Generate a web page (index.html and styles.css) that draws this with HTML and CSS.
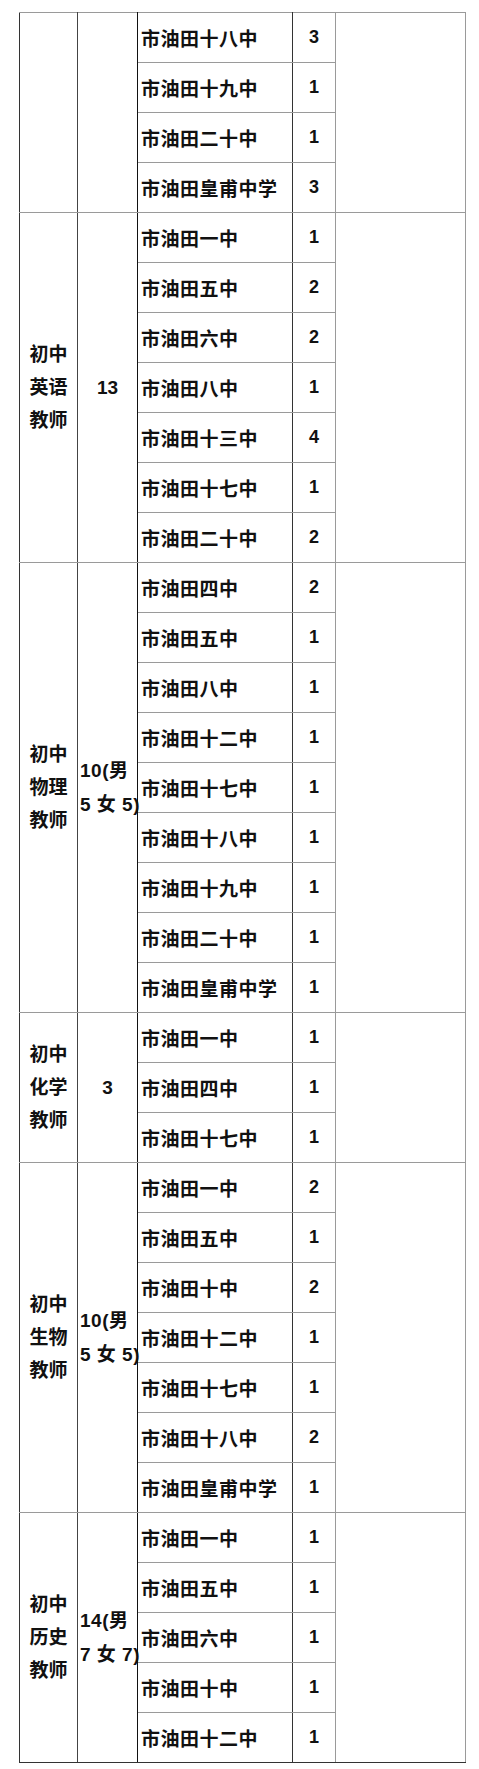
FILE: index.html
```html
<!DOCTYPE html>
<html lang="zh-CN">
<head>
<meta charset="utf-8">
<link rel="stylesheet" href="styles.css">
</head>
<body>
<table class="tbl">
<colgroup><col class="w1"><col class="w2"><col class="w3"><col class="w4"><col class="w5"></colgroup>
<tbody>
<tr><td class="c1" rowspan="4"></td><td class="c2" rowspan="4"></td><td class="c3">市油田十八中</td><td class="c4">3</td><td class="c5" rowspan="4"></td></tr>
<tr><td class="c3">市油田十九中</td><td class="c4">1</td></tr>
<tr><td class="c3">市油田二十中</td><td class="c4">1</td></tr>
<tr><td class="c3">市油田皇甫中学</td><td class="c4">3</td></tr>

<tr><td class="c1" rowspan="7">初中<br>英语<br>教师</td><td class="c2 ctr" rowspan="7">13</td><td class="c3">市油田一中</td><td class="c4">1</td><td class="c5" rowspan="7"></td></tr>
<tr><td class="c3">市油田五中</td><td class="c4">2</td></tr>
<tr><td class="c3">市油田六中</td><td class="c4">2</td></tr>
<tr><td class="c3">市油田八中</td><td class="c4">1</td></tr>
<tr><td class="c3">市油田十三中</td><td class="c4">4</td></tr>
<tr><td class="c3">市油田十七中</td><td class="c4">1</td></tr>
<tr><td class="c3">市油田二十中</td><td class="c4">2</td></tr>

<tr><td class="c1" rowspan="9">初中<br>物理<br>教师</td><td class="c2" rowspan="9"><span class="l">10(男</span><br><span class="l">5 女 5)</span></td><td class="c3">市油田四中</td><td class="c4">2</td><td class="c5" rowspan="9"></td></tr>
<tr><td class="c3">市油田五中</td><td class="c4">1</td></tr>
<tr><td class="c3">市油田八中</td><td class="c4">1</td></tr>
<tr><td class="c3">市油田十二中</td><td class="c4">1</td></tr>
<tr><td class="c3">市油田十七中</td><td class="c4">1</td></tr>
<tr><td class="c3">市油田十八中</td><td class="c4">1</td></tr>
<tr><td class="c3">市油田十九中</td><td class="c4">1</td></tr>
<tr><td class="c3">市油田二十中</td><td class="c4">1</td></tr>
<tr><td class="c3">市油田皇甫中学</td><td class="c4">1</td></tr>

<tr><td class="c1" rowspan="3">初中<br>化学<br>教师</td><td class="c2 ctr" rowspan="3">3</td><td class="c3">市油田一中</td><td class="c4">1</td><td class="c5" rowspan="3"></td></tr>
<tr><td class="c3">市油田四中</td><td class="c4">1</td></tr>
<tr><td class="c3">市油田十七中</td><td class="c4">1</td></tr>

<tr><td class="c1" rowspan="7">初中<br>生物<br>教师</td><td class="c2" rowspan="7"><span class="l">10(男</span><br><span class="l">5 女 5)</span></td><td class="c3">市油田一中</td><td class="c4">2</td><td class="c5" rowspan="7"></td></tr>
<tr><td class="c3">市油田五中</td><td class="c4">1</td></tr>
<tr><td class="c3">市油田十中</td><td class="c4">2</td></tr>
<tr><td class="c3">市油田十二中</td><td class="c4">1</td></tr>
<tr><td class="c3">市油田十七中</td><td class="c4">1</td></tr>
<tr><td class="c3">市油田十八中</td><td class="c4">2</td></tr>
<tr><td class="c3">市油田皇甫中学</td><td class="c4">1</td></tr>

<tr class="last"><td class="c1" rowspan="5">初中<br>历史<br>教师</td><td class="c2" rowspan="5"><span class="l">14(男</span><br><span class="l">7 女 7)</span></td><td class="c3">市油田一中</td><td class="c4">1</td><td class="c5" rowspan="5"></td></tr>
<tr><td class="c3">市油田五中</td><td class="c4">1</td></tr>
<tr><td class="c3">市油田六中</td><td class="c4">1</td></tr>
<tr><td class="c3">市油田十中</td><td class="c4">1</td></tr>
<tr class="end"><td class="c3">市油田十二中</td><td class="c4">1</td></tr>
</tbody>
</table>
</body>
</html>
```

FILE: styles.css
```css
html, body {
  margin: 0;
  padding: 0;
  background: #ffffff;
}

body {
  font-family: "Liberation Sans", "Noto Sans CJK SC", sans-serif;
  font-weight: 700;
  color: #111111;
}

.tbl {
  margin: 12px 0 0 19px;
  width: 446px;
  table-layout: fixed;
  border-collapse: collapse;
  border-top: 1px solid #9a9a9a;
  border-left: 1px solid #333333;
}

.w1 { width: 58px; }
.w2 { width: 60px; }
.w3 { width: 155px; }
.w4 { width: 43px; }
.w5 { width: 130px; }

.tbl tr {
  height: 50px;
}

.tbl td {
  padding: 0;
  border-bottom: 1px solid #9a9a9a;
  vertical-align: middle;
  font-size: 19px;
}

.c1 {
  border-right: 1px solid #444444;
  text-align: center;
  line-height: 33px;
}

.c2 {
  border-right: 1px solid #111111;
  line-height: 34px;
  padding-left: 2px !important;
  white-space: nowrap;
}

.c2.ctr {
  text-align: center;
  padding-left: 0 !important;
}

.c2 .l {
  letter-spacing: 0.5px;
}

.c3 {
  border-right: 1px solid #333333;
  padding-left: 3px !important;
  letter-spacing: 0.5px;
  white-space: nowrap;
}

.c4 {
  border-right: 1px solid #9a9a9a;
  text-align: center;
  font-size: 18px !important;
}

.c5 {
  border-right: 1px solid #9a9a9a;
}

.tbl tr.last td.c1,
.tbl tr.last td.c2,
.tbl tr.last td.c5,
.tbl tr.end td {
  border-bottom: 1px solid #333333;
}
```
